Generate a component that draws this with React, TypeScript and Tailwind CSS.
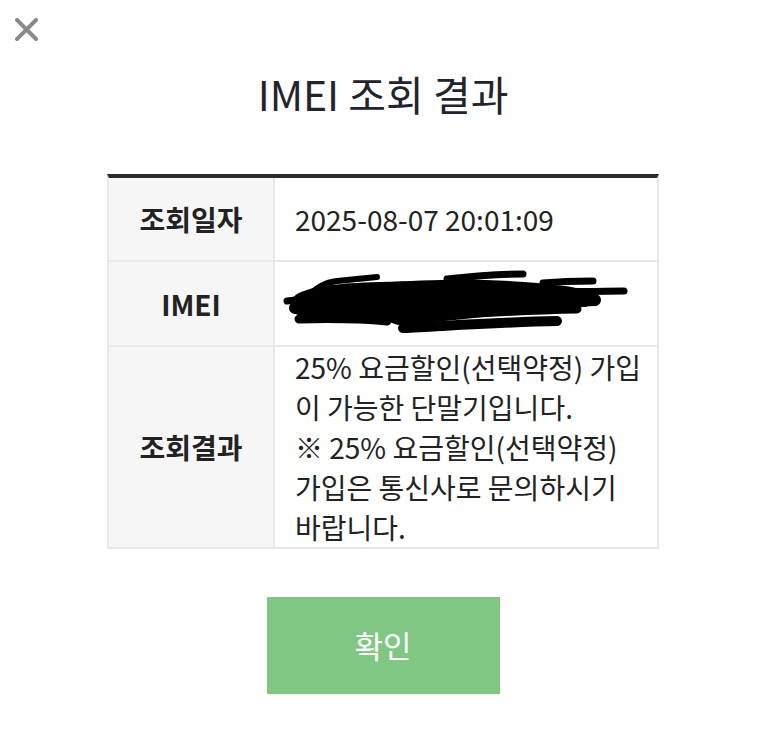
import React from "react";

const font = { fontFamily: '"Noto Sans CJK KR", "Noto Sans", sans-serif' };

function Scribble() {
  return (
    <svg
      className="absolute left-0 top-0"
      width="382"
      height="83"
      viewBox="0 0 382 83"
      fill="none"
    >
      <path
        d="M22 32 C35 25 60 21 105 20 C140 19 170 17 210 18 C245 19 265 21 290 24 C305 26 312 30 305 36 C295 42 278 44 255 49 C225 54 195 56 160 60 C140 63 125 66 115 60 C100 57 80 57 55 59 C35 60 22 56 18 48 C15 40 16 36 22 32 Z"
        fill="#000"
      />
      <g stroke="#000" strokeLinecap="round" strokeLinejoin="round">
        <path d="M12 39 L30 37" strokeWidth="7" />
        <path d="M30 37 C40 26 52 20 62 19 L102 15" strokeWidth="6" />
        <path d="M172 17 C200 14 230 12 248 12" strokeWidth="7" />
        <path d="M268 21 C290 19 305 19 318 19" strokeWidth="7" />
        <path d="M278 29 C310 30 330 29 349 29" strokeWidth="7" />
        <path d="M24 57 C60 56 90 57 112 59" strokeWidth="9" />
        <path d="M128 66 C170 64 230 60 282 59" strokeWidth="10" />
        <path d="M155 54 C200 51 250 48 302 47" strokeWidth="9" />
        <path d="M20 46 C80 42 150 40 240 38 C280 37 300 39 320 38" strokeWidth="12" />
        <path d="M250 42 C275 41 290 40 310 41" strokeWidth="8" />
      </g>
    </svg>
  );
}

export default function App() {
  return (
    <div className="w-[762px] h-[750px] bg-white relative" style={font}>
      <div className="pl-[15px] pt-[18px]">
        <svg width="23" height="23" viewBox="0 0 23 23" className="block">
          <path d="M2 2 L21 21 M21 2 L2 21" stroke="#8a8a8a" strokeWidth="4" strokeLinecap="square" />
        </svg>
      </div>
      <div className="flex flex-col items-center pl-[4px]">
        <h1 className="mt-[24px] text-[41px] leading-[57px] text-[#23232d] font-normal">
          IMEI 조회 결과
        </h1>
        <div className="mt-[52px] w-[552px] border-t-4 border-t-[#2b2b2b] border-x-2 border-x-[#e8e8e8] text-[#222]">
          <div className="flex h-[84px] border-b-2 border-[#e8e8e8]">
            <div className="w-[166px] bg-[#f6f6f6] border-r-2 border-[#e8e8e8] flex items-center justify-center text-[28px] font-bold">
              조회일자
            </div>
            <div className="flex-1 flex items-center pl-[20px] text-[28px]">
              2025-08-07 20:01:09
            </div>
          </div>
          <div className="flex h-[85px] border-b-2 border-[#e8e8e8]">
            <div className="w-[166px] bg-[#f6f6f6] border-r-2 border-[#e8e8e8] flex items-center justify-center text-[28px] font-bold">
              IMEI
            </div>
            <div className="flex-1 relative">
              <Scribble />
            </div>
          </div>
          <div className="flex h-[202px] border-b-2 border-[#e8e8e8]">
            <div className="w-[166px] bg-[#f6f6f6] border-r-2 border-[#e8e8e8] flex items-center justify-center text-[28px] font-bold">
              조회결과
            </div>
            <div className="flex-1 pl-[20px] text-[28px] leading-[40px] whitespace-nowrap">
              <div>25% 요금할인(선택약정) 가입</div>
              <div>이 가능한 단말기입니다.</div>
              <div>※ 25% 요금할인(선택약정)</div>
              <div>가입은 통신사로 문의하시기</div>
              <div>바랍니다.</div>
            </div>
          </div>
        </div>
        <button className="mt-[48px] w-[233px] h-[97px] bg-[#80c783] text-white text-[31px] flex items-center justify-center">
          확인
        </button>
      </div>
    </div>
  );
}
